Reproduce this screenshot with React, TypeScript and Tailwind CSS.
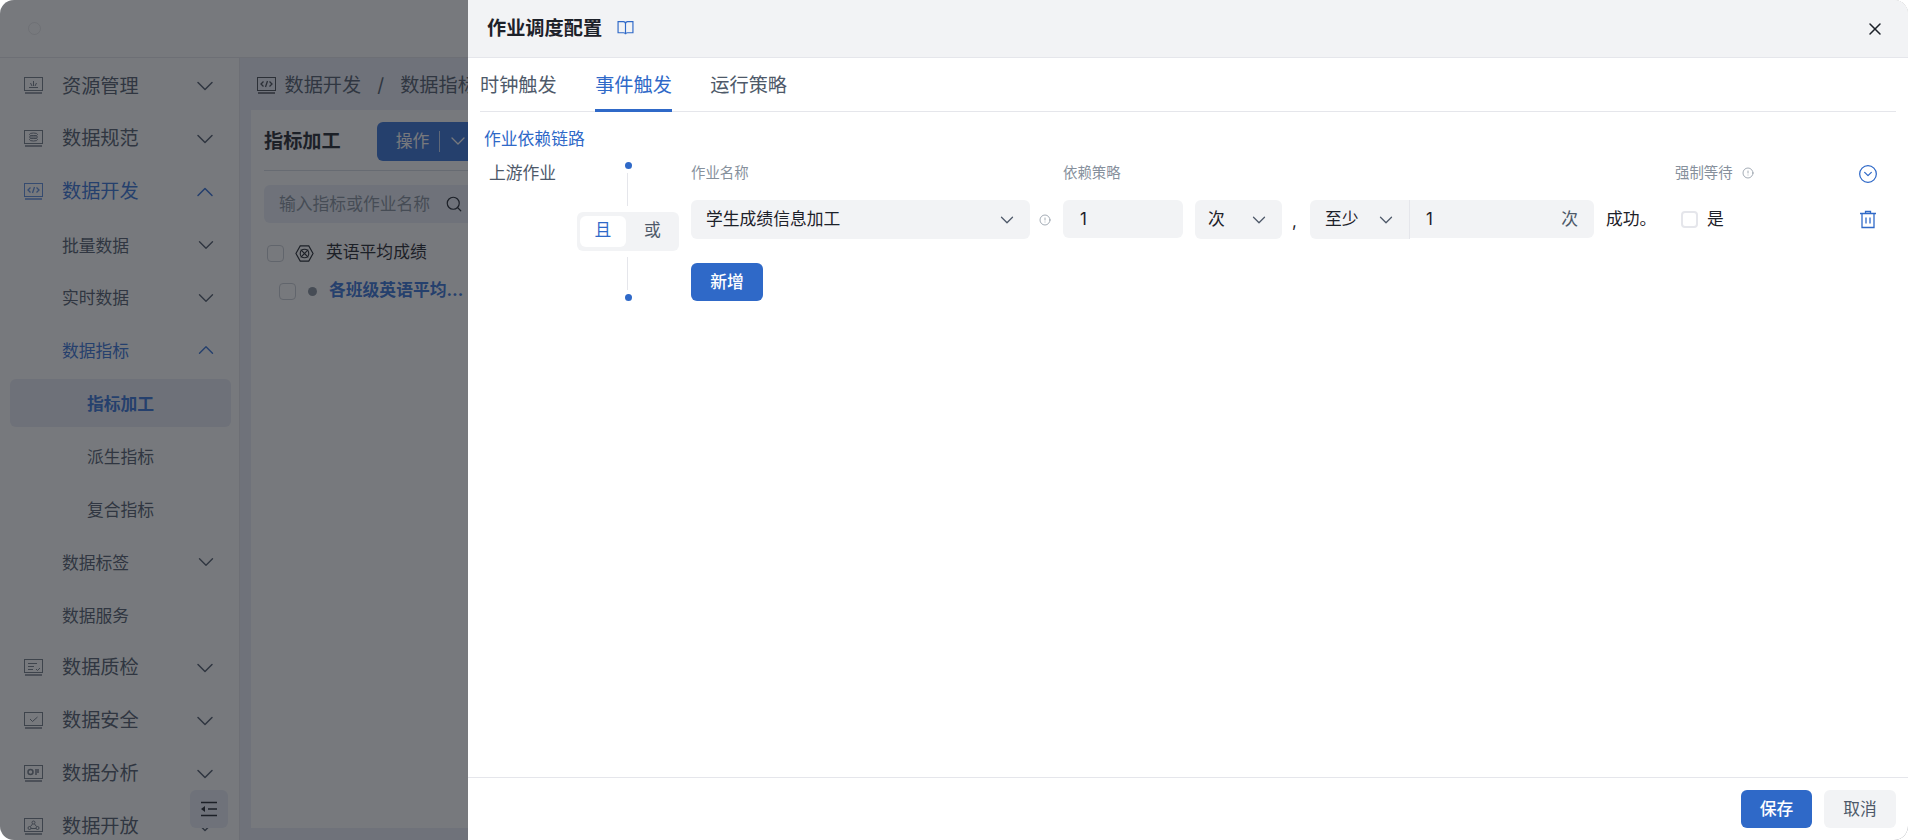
import { ChevronDown, ChevronUp, CircleAlert, CircleChevronDown, Search, X } from "lucide-react";
import type { ReactNode } from "react";

function Screen({ children }: { children: ReactNode }) {
  return (
    <svg viewBox="0 0 19 17" fill="none" stroke="currentColor" strokeWidth="1" className="h-[17px] w-[19px] shrink-0 opacity-80">
      <rect x="0.5" y="0.5" width="18" height="13" />
      <path d="M1 16h17" strokeWidth="1.5" />
      {children}
    </svg>
  );
}

const sideIcons: Record<string, ReactNode> = {
  res: <Screen><path d="M5 10.5h9M9.5 4v5M6.500 6l1.500 3M12.500 6L11 9" /></Screen>,
  spec: <Screen><ellipse cx="9.5" cy="4.5" rx="4" ry="1.5" /><ellipse cx="9.5" cy="7" rx="4" ry="1.5" /><ellipse cx="9.5" cy="9.5" rx="4" ry="1.5" /></Screen>,
  dev: <Screen><path d="M6.5 4.5L4 7l2.5 2.5M12.5 4.5L15 7l-2.5 2.5M10.5 4l-2 6" strokeWidth="1.3" /></Screen>,
  qa: <Screen><path d="M4 4.5h9M4 7.5h6M4 10.5h5M12 10l1.5 1.5L16 9" /></Screen>,
  safe: <Screen><path d="M6 7l2.5 2.5L13.5 5" /></Screen>,
  ana: <Screen><circle cx="6.5" cy="7" r="2.5" strokeWidth="1.5" /><path d="M11 5h4M11 7h4M11 9h2" strokeWidth="1.5" /></Screen>,
  open: <Screen><circle cx="9.5" cy="4.5" r="1.5" /><circle cx="5.5" cy="10" r="1.5" /><circle cx="13.5" cy="10" r="1.5" /><path d="M8.5 6L6.5 8.5M10.5 6l2 2.5M7 10.5h5" /></Screen>,
};

function TopItem({ icon, label, open, active }: { icon: string; label: string; open?: boolean; active?: boolean }) {
  return (
    <div className={`flex h-[52.9px] items-center pl-[24px] pr-[20px] text-[19.2px] ${active ? "text-[#3370d6]" : "text-[#4e5969]"}`}>
      {sideIcons[icon]}
      <span className="ml-[19px] flex-1">{label}</span>
      {open ? <ChevronUp size={28} strokeWidth={1.3} /> : <ChevronDown size={28} strokeWidth={1.3} />}
    </div>
  );
}

function SubItem({ label, open, active, chevron = true }: { label: string; open?: boolean; active?: boolean; chevron?: boolean }) {
  return (
    <div className={`flex h-[52.9px] items-center pl-[62px] pr-[20px] pt-[3px] text-[16.8px] ${active ? "text-[#3370d6]" : "text-[#4e5969]"}`}>
      <span className="flex-1">{label}</span>
      {chevron && (open ? <ChevronUp size={26} strokeWidth={1.3} className="-mt-[3px]" /> : <ChevronDown size={26} strokeWidth={1.3} className="-mt-[3px]" />)}
    </div>
  );
}

function LeafItem({ label }: { label: string }) {
  return <div className="flex h-[52.9px] items-center pl-[87px] pt-[2px] text-[16.8px] text-[#4e5969]">{label}</div>;
}

function Sidebar() {
  return (
    <aside className="relative h-full w-[240px] shrink-0 border-r border-[#e5e6eb] bg-white pt-[1.5px]">
      <TopItem icon="res" label="资源管理" />
      <TopItem icon="spec" label="数据规范" />
      <TopItem icon="dev" label="数据开发" open active />
      <SubItem label="批量数据" />
      <SubItem label="实时数据" />
      <SubItem label="数据指标" open active />
      <div className="ml-[10px] mr-[8px] my-[2.5px] flex h-[48px] items-center rounded-md bg-[#e8ebf5] pl-[77px] pt-[2px] text-[16.8px] font-bold text-[#3370d6]">
        指标加工
      </div>
      <LeafItem label="派生指标" />
      <LeafItem label="复合指标" />
      <SubItem label="数据标签" />
      <SubItem label="数据服务" chevron={false} />
      <TopItem icon="qa" label="数据质检" />
      <TopItem icon="safe" label="数据安全" />
      <TopItem icon="ana" label="数据分析" />
      <TopItem icon="open" label="数据开放" />
      <div className="absolute left-[190px] top-[732px] flex h-[38px] w-[38px] items-center justify-center rounded-md bg-[#eaeef8] text-[#1d2129]">
        <svg viewBox="0 0 18 16" fill="none" stroke="currentColor" strokeWidth="1.4" className="h-[16px] w-[18px]">
          <path d="M1 1.5h16M8 8h9M1 14.5h16" />
          <path d="M5 5L1 8l4 3z" fill="currentColor" stroke="none" />
        </svg>
      </div>
    </aside>
  );
}

function Background() {
  return (
    <div className="flex h-full flex-col bg-white">
      <div className="flex h-[58px] shrink-0 items-center border-b border-[#e5e6eb] pl-[28px]">
        <div className="h-[13px] w-[13px] rounded-full border border-[#6f7278] opacity-15" />
      </div>
      <div className="flex min-h-0 flex-1">
        <Sidebar />
        <main className="min-w-0 flex-1 bg-[#eaeef8] pl-[11px] pr-[12px]">
          <div className="flex h-[52px] items-center whitespace-nowrap pt-[2px] text-[19.2px] text-[#4e5969]">
            <span className="ml-[6px] text-[#1d2129]">{sideIcons.dev}</span>
            <span className="ml-[8.500px]">数据开发</span>
            <span className="mx-[16px]">/</span>
            <span>数据指标</span>
          </div>
          <div className="h-[718px] w-[1200px] bg-white pl-[13px]">
            <div className="flex h-[61px] w-[1000px] items-center border-b border-[#d8dbe3] pt-[2px]">
              <span className="pt-[1px] text-[19.2px] font-bold text-[#1d2129]">指标加工</span>
              <div className="ml-[36px] flex h-[39px] w-[120px] items-center rounded-md bg-[#3370d6] pl-[19px] text-[16.8px] text-white">
                <span className="pt-[2px]">操作</span>
                <span className="ml-[10px] h-[21px] w-px bg-white/70" />
                <ChevronDown size={24} strokeWidth={1.3} className="ml-[6px]" />
              </div>
            </div>
            <div className="mt-[14px] flex h-[38px] w-[400px] items-center rounded-md bg-[#eaeef8] pl-[15px] text-[16.8px] text-[#86909c]">
              <span className="pt-[1px]">输入指标或作业名称</span>
              <Search size={18} strokeWidth={1.6} className="ml-[15px] text-[#1d2129]" />
            </div>
            <div className="mt-[21px] flex h-[18px] items-center text-[16.8px] text-[#1d2129]">
              <span className="ml-[3px] h-[17px] w-[17px] rounded border border-[#c9cdd4]" />
              <svg viewBox="0 0 20 20" fill="none" stroke="currentColor" strokeWidth="1.2" className="ml-[11px] h-[19px] w-[19px]">
                <path d="M5.5 2h9L19 10l-4.5 8h-9L1 10z" />
                <circle cx="10" cy="10" r="4.5" />
                <path d="M6 6l8 8M14 6l-8 8" />
              </svg>
              <span className="ml-[12px]">英语平均成绩</span>
            </div>
            <div className="mt-[20px] flex h-[18px] items-center text-[16.8px]">
              <span className="ml-[15px] h-[17px] w-[17px] rounded border border-[#c9cdd4]" />
              <span className="ml-[12px] h-[9px] w-[9px] rounded-full bg-[#86909c]" />
              <span className="ml-[12px] font-bold text-[#3370d6]">各班级英语平均…</span>
            </div>
          </div>
        </main>
      </div>
    </div>
  );
}

function Info() {
  return <CircleAlert size={12} strokeWidth={1.5} className="shrink-0 text-[#86909c]" />;
}

function FieldChevron() {
  return <ChevronDown size={22} strokeWidth={1.4} className="-mt-px shrink-0 text-[#4e5969]" />;
}

function TriggerRow() {
  return (
    <div className="flex h-[39px] items-center text-[16.8px] text-[#1d2129]">
      <div className="flex h-[39px] w-[339px] items-center justify-between rounded-md bg-[#f2f3f5] pl-[15px] pr-[12px] pt-[1px]">
        学生成绩信息加工
        <FieldChevron />
      </div>
      <div className="ml-[9px]"><Info /></div>
      <div className="ml-[12px] flex h-[38px] w-[120px] items-center self-start rounded-md bg-[#f2f3f5] pl-[17px] pt-[2px] text-[#1d2129]">1</div>
      <div className="ml-[12px] flex h-[39px] w-[87px] items-center justify-between rounded-md bg-[#f2f3f5] pl-[13px] pr-[12px] pt-[1px]">
        次
        <FieldChevron />
      </div>
      <span className="w-[28px] pl-[10px] pt-[4px]">,</span>
      <div className="flex h-[39px] w-[100px] items-center justify-between rounded-l-md border-r border-[#e5e6eb] bg-[#f2f3f5] pl-[15px] pr-[12px] pt-[1px]">
        至少
        <FieldChevron />
      </div>
      <div className="flex h-[38px] w-[184px] items-center justify-between self-start rounded-r-md bg-[#f2f3f5] pl-[16px] pr-[16px] pt-[2px]">
        <span>1</span>
        <span className="text-[#4e5969]">次</span>
      </div>
      <span className="ml-[12px] w-[75px]">成功。</span>
      <span className="h-[17px] w-[17px] rounded-[4px] border-2 border-[#e5e6eb]" />
      <span className="ml-[9px] w-[152px]">是</span>
      <svg viewBox="0 0 18 19" fill="none" stroke="#2f69c8" strokeWidth="1.3" className="h-[19px] w-[18px] shrink-0">
        <path d="M1 3.500h16M6.500 3V1.500h5V3M3 4v13.500h12V4M7 7.500v6M11 7.500v6" />
      </svg>
    </div>
  );
}

function Drawer() {
  return (
    <div className="absolute inset-y-0 right-0 flex w-[1440px] flex-col bg-white">
      <header className="flex h-[58px] shrink-0 items-center border-b border-[#e5e6eb] bg-[#f2f3f5] pl-[19px] pr-[23px]">
        <h1 className="text-[19.2px] font-bold text-[#1d2129]">作业调度配置</h1>
        <svg viewBox="0 0 16 15" fill="none" stroke="#2f69c8" strokeWidth="1.1" className="ml-[15px] h-[17px] w-[17px]">
          <path d="M1 1h5c1 0 2 .6 2 2v10c0-1-1-1.500-2-1.500H1zM15 1h-5C9 1 8 1.600 8 3v10c0-1 1-1.500 2-1.500h5z" />
        </svg>
        <X size={20} strokeWidth={1.8} className="ml-auto text-[#1d2129]" />
      </header>

      <div className="ml-[12px] mr-[12px] flex h-[54px] shrink-0 gap-[38.4px] border-b border-[#e5e6eb] text-[19.2px] text-[#4e5969]">
        <div className="flex h-[54px] items-center">时钟触发</div>
        <div className="flex h-[54px] items-center border-b-[3px] border-[#2f69c8] pt-[3px] text-[#2f69c8]">事件触发</div>
        <div className="flex h-[54px] items-center">运行策略</div>
      </div>

      <div className="min-h-0 flex-1">
        <div className="ml-[16px] mt-[15px] text-[16.8px] leading-[24px] text-[#2f69c8]">作业依赖链路</div>
        <div className="ml-[21px] mt-[10px] flex">
          <div className="w-[88px] text-[16.8px] leading-[24px] text-[#4e5969]">上游作业</div>
          <div className="flex h-[140px] w-[102px] flex-col items-center pt-[0.5px]">
            <span className="h-[7px] w-[7px] rounded-full bg-[#2f69c8]" />
            <span className="mt-[4px] h-[33px] w-px -translate-x-px bg-[#e5e6eb]" />
            <div className="mt-[6px] flex h-[39px] w-full items-center rounded-md bg-[#f2f3f5] pl-[3px] text-[16.8px]">
              <span className="flex h-[31px] w-[46px] items-center justify-center rounded-md bg-white text-[#2f69c8]">且</span>
              <span className="flex flex-1 justify-center text-[#4e5969]">或</span>
            </div>
            <span className="mt-[6px] h-[33px] w-px -translate-x-px bg-[#e5e6eb]" />
            <span className="mt-[4.500px] h-[7px] w-[7px] rounded-full bg-[#2f69c8]" />
          </div>
          <div className="ml-[12px] flex flex-col">
            <div className="flex h-[24px] items-center text-[14.4px] text-[#86909c]">
              <span className="w-[372px]">作业名称</span>
              <span className="w-[612px]">依赖策略</span>
              <span className="flex w-[184px] items-center gap-[9px]">强制等待 <Info /></span>
              <CircleChevronDown size={20} strokeWidth={1.5} className="-ml-px mt-[2px] text-[#2f69c8]" />
            </div>
            <div className="mt-[15px]"><TriggerRow /></div>
            <button className="mt-[24px] h-[38px] w-[72px] rounded-md bg-[#2f69c8] pt-[1px] text-[16.8px] font-medium text-white">新增</button>
          </div>
        </div>
      </div>

      <footer className="flex h-[63px] shrink-0 items-start justify-end gap-[12px] border-t border-[#e5e6eb] pr-[12px] pt-[12px] text-[16.8px]">
        <button className="h-[38px] w-[71px] rounded-md bg-[#2f69c8] pt-[1px] font-medium text-white">保存</button>
        <button className="h-[38px] w-[72px] rounded-md bg-[#f2f3f5] pt-[1px] text-[#4e5969]">取消</button>
      </footer>
    </div>
  );
}

export default function App() {
  return (
    <div className="relative h-[840px] w-[1908px] overflow-hidden rounded-[14px] font-['Inter','Noto_Sans_CJK_SC',sans-serif]">
      <Background />
      <div className="absolute inset-0 bg-[#1d2027]/60" />
      <Drawer />
    </div>
  );
}
